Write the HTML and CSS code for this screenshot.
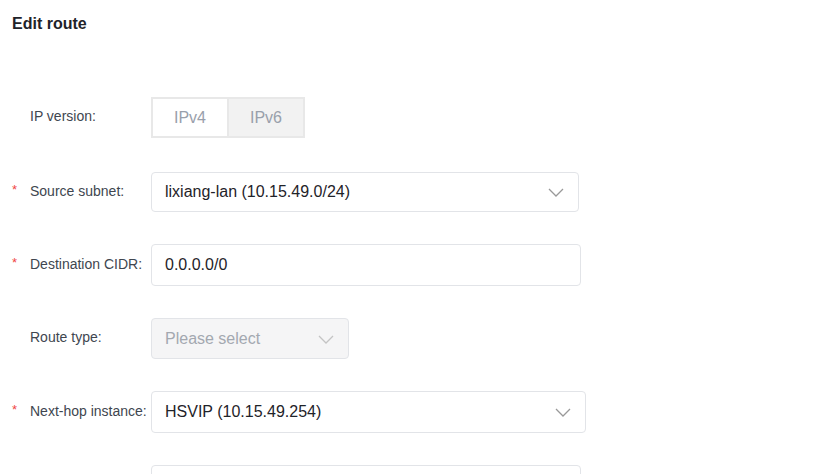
FILE: index.html
```html
<!DOCTYPE html>
<html lang="en">
<head>
    <meta charset="UTF-8">
    <title>Edit route</title>
    <link rel="stylesheet" href="styles.css">
</head>
<body>
<div class="page">
    <h1 class="title">Edit route</h1>

    <form class="route-form">
        <div class="row row-version">
            <label class="label">IP version:</label>
            <div class="segmented">
                <span class="seg">IPv4</span>
                <span class="seg seg-off">IPv6</span>
            </div>
        </div>

        <div class="row">
            <label class="label required">Source subnet:</label>
            <div class="field select w-source">
                <span class="value">lixiang-lan (10.15.49.0/24)</span>
                <svg class="chev" width="16" height="9" viewBox="0 0 16 9"><path d="M1 1l7 7 7-7" fill="none" stroke="#999" stroke-width="1.3"/></svg>
            </div>
        </div>

        <div class="row">
            <label class="label required">Destination CIDR:</label>
            <div class="field w-dest">
                <span class="value">0.0.0.0/0</span>
            </div>
        </div>

        <div class="row">
            <label class="label">Route type:</label>
            <div class="field select disabled w-type">
                <span class="value placeholder">Please select</span>
                <svg class="chev" width="16" height="9" viewBox="0 0 16 9"><path d="M1 1l7 7 7-7" fill="none" stroke="#c4c4c4" stroke-width="1.3"/></svg>
            </div>
        </div>

        <div class="row">
            <label class="label required">Next-hop instance:</label>
            <div class="field select w-hop">
                <span class="value">HSVIP (10.15.49.254)</span>
                <svg class="chev" width="16" height="9" viewBox="0 0 16 9"><path d="M1 1l7 7 7-7" fill="none" stroke="#999" stroke-width="1.3"/></svg>
            </div>
        </div>

        <div class="row row-last">
            <label class="label"></label>
            <div class="field w-dest"></div>
        </div>
    </form>
</div>
</body>
</html>
```

FILE: styles.css
```css
html, body {
    height: 474px;
    overflow: hidden;
}
body {
    margin: 0;
    font-family: "Liberation Sans", Arial, sans-serif;
    background-color: #fff;
    color: #333;
}
.page {
    padding: 15px 12px 0 12px;
    height: 459px;
    overflow: hidden;
}
.title {
    margin: 0;
    font-size: 16px;
    font-weight: bold;
    color: #1f2329;
    line-height: 18px;
}
.route-form {
    margin-top: 64px;
}
.row {
    display: flex;
    align-items: center;
    margin-bottom: 32px;
}
.row-version {
    margin-bottom: 34px;
}
.row-last {
    margin-bottom: 0;
}
.label {
    position: relative;
    width: 121px;
    flex-shrink: 0;
    padding-left: 18px;
    font-size: 14px;
    color: #40464f;
    margin-top: -3px;
}
.label.required::before {
    content: "*";
    position: absolute;
    left: 0;
    top: -1px;
    color: #f04646;
    font-size: 13px;
}
.segmented {
    display: flex;
    border: 2px solid #e8e8e8;
    height: 37px;
}
.seg {
    width: 74px;
    display: flex;
    align-items: center;
    justify-content: center;
    font-size: 16px;
    color: #99a0ab;
}
.seg-off {
    background-color: #f2f2f2;
    border-left: 2px solid #e8e8e8;
}
.field {
    box-sizing: border-box;
    height: 41px;
    border: 1.5px solid #e2e4e8;
    border-radius: 4px;
    display: flex;
    align-items: center;
    justify-content: space-between;
    padding: 0 14px 0 13px;
    background-color: #fff;
}
.value {
    font-size: 16px;
    color: #1f2329;
}
.placeholder {
    color: #a3a8b0;
}
.disabled {
    background-color: #f5f5f6;
}
.chev {
    margin-top: 1px;
}
.w-source { width: 428px; height: 40px; }
.w-dest { width: 430px; height: 42px; }
.w-type { width: 198px; }
.w-hop { width: 435px; height: 42px; }
```
